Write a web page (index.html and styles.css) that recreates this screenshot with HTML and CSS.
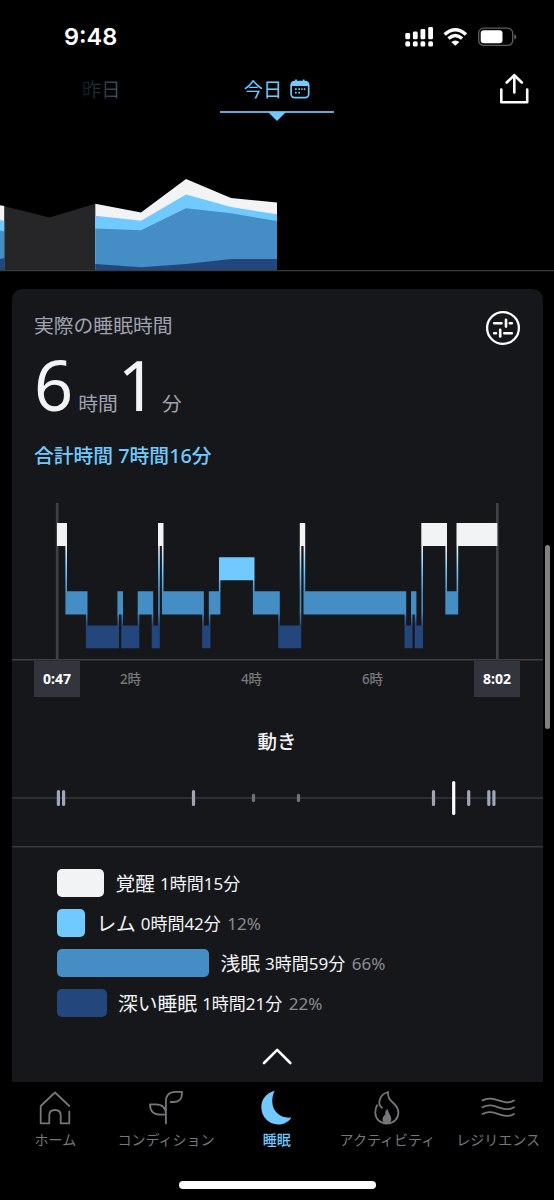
FILE: index.html
```html
<!DOCTYPE html>
<html lang="ja">
<head>
<meta charset="utf-8">
<title>睡眠</title>
<link rel="stylesheet" href="styles.css">
</head>
<body>
<div class="screen">
  <header class="status">
    <span class="clock">9:48</span>
    <svg class="status-icons" width="114" height="24" viewBox="404 25 114 24">
      <g fill="#fff">
        <rect x="405.300" y="33" width="4.800" height="6.300" rx="1.400"/><rect x="412.900" y="31.500" width="4.800" height="7.800" rx="1.400"/>
        <rect x="420.500" y="29" width="4.800" height="10.300" rx="1.400"/><rect x="428.200" y="27" width="4.800" height="12.300" rx="1.400"/>
        <rect x="405.300" y="41.300" width="4.800" height="5.200" rx="1.600"/><rect x="412.900" y="41.300" width="4.800" height="5.200" rx="1.600"/>
        <rect x="420.500" y="41.300" width="4.800" height="5.200" rx="1.600"/><rect x="428.200" y="41.300" width="4.800" height="5.200" rx="1.600"/>
        <path d="M451.200 41.900Q455.300 38.900 459.400 41.900L455.300 45.700Z"/>
      </g>
      <g fill="none" stroke="#fff" stroke-width="3.400">
        <path d="M444.600 34.600Q455.300 24.800 466 34.600"/>
        <path d="M448.500 38.500Q455.300 32.400 462.100 38.500"/>
      </g>
      <rect x="478.700" y="28.200" width="34" height="17.200" rx="5" fill="none" stroke="#5e5e5e" stroke-width="1.300"/>
      <rect x="480.700" y="30.300" width="21.800" height="13" rx="3" fill="#fff"/>
      <path d="M514.300 34.200Q516.300 34.800 516.300 36.800T514.300 39.400Z" fill="#666"/>
    </svg>
  </header>

  <nav class="days">
    <span class="day-prev">昨日</span>
    <div class="day-today">
      <span>今日</span>
      <svg width="20" height="20" viewBox="0 0 20 20">
        <rect x="1.100" y="2.500" width="17.600" height="16.100" rx="3.500" fill="none" stroke="#70caff" stroke-width="1.700"/>
        <path d="M1 7V5.500Q1 2.200 4.500 2.200H15.300Q18.800 2.200 18.800 5.500V7ZM5.100 .6H6.900V3H5.100ZM12.800 .6H14.600V3H12.800Z" fill="#70caff"/>
        <path d="M5 9.300H6.700V11H5ZM8.300 9.300H10V11H8.300ZM11.200 9.300H12.600V11H11.200ZM13.800 9.300H15.300V11H13.800ZM5 12.800H6.700V14.500H5ZM8.300 12.800H10V14.500H8.300Z" fill="#70caff"/>
      </svg>
    </div>
    <svg class="share" width="30" height="32" viewBox="499 73 30 32" fill="none" stroke="#fff" stroke-width="2.600" stroke-linecap="round" stroke-linejoin="round">
      <path d="M501.300 89.500V102.300H527.200V89.500M514.300 92.500V75.500M506.700 82.500L514.300 75.200L521.800 82.500"/>
    </svg>
  </nav>

  <svg class="trend" width="554" height="152" viewBox="0 120 554 152">
    <path d="M0 205.300L4.500 206V270H0Z" fill="#f2f3f5"/><path d="M0 220L4.500 221V270H0Z" fill="#70caff"/>
    <path d="M0 230.500L4.500 231.500V270H0Z" fill="#458ec5"/><path d="M0 259L4.500 258V270H0Z" fill="#23477c"/>
    <path d="M4.500 206.300L49.500 217.500L95.300 203.700V270.500H4.500Z" fill="#262628"/>
    <path d="M95.300 203.700L141 212.500L186 179L231 198L277 202.500V270H95.300Z" fill="#f2f3f5"/>
    <path d="M95.300 215.700L141 220.700L186 194.500L231 207L277 214.300V270H95.300Z" fill="#70caff"/>
    <path d="M95.300 228.500L141 230.300L186 208.300L231 213.300L277 221V270H95.300Z" fill="#458ec5"/>
    <path d="M95.300 264L141 267.300L186 264L231 259H277V270H95.300Z" fill="#23477c"/>
    <path d="M0 270.700H554" stroke="#3a3a3e" stroke-width="1.300"/>
  </svg>

  <main class="card">
    <div class="card-head">
      <h1>実際の睡眠時間</h1>
      <svg width="36" height="36" viewBox="0 0 36 36" fill="none" stroke="#fff" stroke-linecap="round">
        <circle cx="18" cy="18" r="15.900" stroke-width="2.300"/>
        <path d="M9.200 13.300H16.500M24.800 13.300H26.800M9.200 23.200H11M19.300 23.200H26.800M21 9.800V16.600M15.200 19.700V26.500" stroke-width="2.600"/>
      </svg>
    </div>
    <div class="duration"><b>6</b><span>時間</span><b>1</b><span>分</span></div>
    <div class="total">合計時間 7時間16分</div>

    <svg class="hypnogram" width="531" height="161" viewBox="12 500 531 161">
      <defs>
        <linearGradient id="stages" gradientUnits="userSpaceOnUse" x1="0" y1="546" x2="0" y2="626">
          <stop offset="0" stop-color="#f2f3f5"/><stop offset=".3" stop-color="#70caff"/>
          <stop offset=".6" stop-color="#458ec5"/><stop offset=".82" stop-color="#458ec5"/><stop offset="1" stop-color="#23477c"/>
        </linearGradient>
      </defs>
      <path d="M57.200 503V660M497.300 503V660" stroke="#414145" stroke-width="2.700"/>
      <path d="M12 659.700H543" stroke="#414145" stroke-width="1.500"/>
      <path stroke="url(#stages)" stroke-width="1.600" fill="none" d="M66.200 546V592M86.700 614V626M118.200 614V626M122.200 614V626M138.500 614V626M152.500 614V626M159 546V626M162.700 546V592M203 614V626M209.600 614V626M219.700 580V592M253.700 580V592M279 614V626M300.500 546V626M304.400 546V592M405.400 614V626M411.800 614V626M415.600 614V626M422.200 546V626M446.200 546V592M457.400 546V592"/>
      <path fill="#f2f3f5" d="M57 523H67V546H57ZM158 523H163.500V546H158ZM299.800 523H305.200V546H299.800ZM421.300 523H447V546H421.300ZM456.500 523H497.300V546H456.500Z"/>
      <path fill="#70caff" d="M219 557.300H254.500V580.300H219Z"/>
      <path fill="#458ec5" d="M65.400 591.300H87.500V614.500H65.400ZM117.400 591.300H123V614.500H117.400ZM137.700 591.300H153.200V614.500H137.700ZM161.900 591.300H203.800V614.500H161.900ZM208.800 591.300H220.400V614.500H208.800ZM252.900 591.300H279.800V614.500H252.900ZM303.500 591.300H406.200V614.500H303.500ZM411 591.300H416.400V614.500H411ZM445.300 591.300H458.200V614.500H445.300Z"/>
      <path fill="#23477c" d="M85.900 625.500H119V648.200H85.900ZM121.300 625.500H139.300V648.200H121.300ZM151.700 625.500H159.800V648.200H151.700ZM202.200 625.500H210.400V648.200H202.200ZM278.200 625.500H301.200V648.200H278.200ZM404.500 625.500H412.500V648.200H404.500ZM414.800 625.500H423V648.200H414.800Z"/>
    </svg>
    <div class="axis">
      <span class="bound">0:47</span><span class="hour hour-2">2時</span><span class="hour">4時</span><span class="hour">6時</span><span class="bound bound-end">8:02</span>
    </div>

    <h2>動き</h2>
    <svg class="movement" width="531" height="72" viewBox="12 776 531 72">
      <path d="M12 798H543M12 846.800H543" stroke="#38393d" stroke-width="1.600"/>
      <g stroke-width="3.200" stroke-linecap="round">
        <path stroke="#9fa6b7" d="M58.400 791.600V804.400M63.600 791.600V804.400M193.500 791.600V804.400M433.500 791.600V804.400M468.700 791.600V804.400M488.800 791.600V804.400M493.900 791.600V804.400"/>
        <path stroke="#707276" d="M253.500 795.400V800.600M298.500 795.400V800.600"/>
        <path stroke="#fff" d="M453.700 782.500V813.500"/>
      </g>
    </svg>

    <ul class="legend">
      <li><i class="bar awake"></i><strong>覚醒</strong><span>1時間15分</span></li>
      <li><i class="bar rem"></i><strong>レム</strong><span>0時間42分</span><em>12%</em></li>
      <li><i class="bar light"></i><strong>浅眠</strong><span>3時間59分</span><em>66%</em></li>
      <li><i class="bar deep"></i><strong>深い睡眠</strong><span>1時間21分</span><em>22%</em></li>
    </ul>
    <svg class="collapse" width="32" height="20" viewBox="0 0 32 20" fill="none" stroke="#fff" stroke-width="2.600" stroke-linecap="round" stroke-linejoin="round"><path d="M2 16L15.200 2.800L28.300 16"/></svg>
  </main>

  <nav class="tabs">
    <a><svg width="36" height="36" viewBox="37 1090 36 36" fill="none" stroke="#77777a" stroke-width="1.800"><path stroke-linecap="round" stroke-linejoin="round" d="M69.300 1106L55 1092.500L40.700 1106V1123.300H49.300V1115.300Q49.300 1110 55 1110T60.700 1115.300V1123.300H69.300V1111.500"/></svg>ホーム</a>
    <a><svg width="36" height="36" viewBox="148 1090 36 36" fill="none" stroke="#77777a" stroke-width="1.800" stroke-linecap="round" stroke-linejoin="round"><path d="M165.900 1123.500V1101.500Q165.900 1091.800 175.500 1091.800H182V1093Q182 1102 174 1102H170.800M165.900 1114.700H161Q150 1114.700 150 1104.400H155.500Q165.900 1104.400 165.900 1114.700"/></svg>コンディション</a>
    <a class="on"><svg width="36" height="36" viewBox="259 1090 36 36"><path d="M274.800 1090.800C266.500 1092.500 261.300 1099.500 261.300 1107.300C261.300 1117 269 1124.500 278.200 1124.500C284 1124.500 289 1121.800 291.400 1117.500C280.500 1118.700 272.600 1111.500 272.300 1102.300C272.200 1098 273 1094 274.800 1090.800Z" fill="#70caff"/></svg>睡眠</a>
    <a><svg width="36" height="36" viewBox="369.400 1090 36 36" fill="none" stroke="#77777a" stroke-width="1.800" stroke-linecap="round" stroke-linejoin="round"><path d="M382.400 1107.800C377.500 1104.500 379.500 1094.500 388.500 1092C387 1102.500 398.800 1102.500 398.800 1112.500C398.800 1118.800 394 1123.500 387.300 1123.500C380.500 1123.500 375.700 1118.800 375.700 1112.800C375.700 1109.500 376.400 1107 377.500 1105.200"/><path stroke="none" fill="#77777a" d="M388 1108.800C388.800 1113.500 391.700 1115.500 391.700 1119.300C391.700 1121.500 390.300 1123.600 387.500 1123.600C384.700 1123.600 382.900 1122 382.900 1119.500C382.900 1117.500 384 1115.600 385.600 1114.700C385.400 1112 386.100 1110.300 388 1108.800Z"/></svg>アクティビティ</a>
    <a><svg width="36" height="36" viewBox="480 1090 36 36" fill="none" stroke="#77777a" stroke-width="1.800" stroke-linecap="round"><path d="M482.500 1100.400C494 1094 503 1107 514 1100.400M482.500 1107.200C494 1100.800 503 1113.800 514 1107.200M482.500 1114C494 1107.600 503 1120.600 514 1114"/></svg>レジリエンス</a>
  </nav>
  <div class="home-bar"></div>
  <div class="scrollbar"></div>
</div>
</body>
</html>
```
FILE: styles.css
```css
* { box-sizing: border-box; }
body {
  margin: 0;
  background: #000;
  color: #f2f3f5;
  font-family: "Noto Sans", "Noto Sans CJK JP", sans-serif;
}
svg { display: block; flex: none; }
.screen {
  position: relative;
  width: 554px;
  height: 1200px;
  overflow: hidden;
  display: flex;
  flex-direction: column;
}
.status {
  height: 74px;
  padding: 0 36px 0 64px;
  display: flex;
  align-items: center;
  justify-content: space-between;
}
.clock { font: 600 23.500px/30px Inter, sans-serif; color: #fff; }

.days {
  height: 46px;
  display: grid;
  grid-template-columns: 220px 114px 1fr;
  font-size: 19.300px;
  line-height: 32px;
}
.day-prev {
  justify-self: start;
  margin-left: 82px;
  background: linear-gradient(90deg, #10181e, #38596d);
  background-clip: text;
  -webkit-background-clip: text;
  color: transparent;
  height: 32px;
}
.day-today {
  position: relative;
  height: 39px;
  display: flex;
  justify-content: center;
  gap: 8px;
  color: #70caff;
  border-bottom: 2px solid #5fabd8;
}
.day-today svg { margin-top: 5px; }
.day-today::after {
  content: "";
  position: absolute;
  top: 38px;
  left: 48px;
  border: 9px solid transparent;
  border-top-color: #70caff;
  border-bottom: 0;
}
.share { justify-self: end; margin-right: 25px; margin-top: -1px; }
.trend { flex: none; }

.card {
  height: 793px;
  flex: none;
  margin: 17px 11px 0 12px;
  background: #16171a;
  border-radius: 10px 10px 0 0;
}
.card-head {
  height: 62px;
  padding: 21px 22px 0 22px;
  display: flex;
  justify-content: space-between;
}
h1 { margin: 1px 0 0; font-size: 19.800px; line-height: 30px; font-weight: 400; color: #9fa3b0; }
.duration {
  height: 86px;
  padding-left: 22px;
  display: flex;
  align-items: baseline;
  line-height: 68px;
}
.duration b { font-size: 68.500px; font-weight: 400; }
.duration span { font-size: 19.800px; color: #9fa3b0; margin-left: 5px; }
.total {
  height: 63px;
  padding: 4px 0 0 22px;
  font-size: 19.800px;
  line-height: 30px;
  font-weight: 500;
  color: #70caff;
}
.axis {
  height: 37px;
  padding: 0 23px 0 22px;
  display: grid;
  grid-template-columns: 46px 111px 121px 121px 1fr;
  font-size: 13.500px;
  line-height: 37px;
  text-align: center;
}
.bound { background: #33353c; color: #fff; font-weight: 700; font-size: 14px; height: 36px; line-height: 35px; }
.bound-end { justify-self: end; width: 46px; }
.hour { color: #77787b; font-weight: 500; }
.hour-2 { padding-right: 10px; }
h2 {
  margin: 0;
  padding: 29px 1px 0 0;
  height: 78px;
  font-size: 19.500px;
  line-height: 30px;
  font-weight: 500;
  text-align: center;
}
.legend {
  list-style: none;
  margin: 0;
  padding: 21px 0 0 45px;
  display: grid;
  gap: 12px;
}
.legend li { height: 28px; display: flex; align-items: center; line-height: 28px; font-size: 17px; }
.legend li > :not(.bar) { padding-top: 2px; }
.bar { height: 28px; border-radius: 5px; margin-right: 11.500px; }
.awake { width: 47px; background: #f2f3f5; }
.rem { width: 28px; background: #70caff; }
.light { width: 152px; background: #458ec5; }
.deep { width: 49.500px; background: #23477c; }
.legend strong { font-size: 19.800px; font-weight: 400; margin-right: 5px; }
.legend em { font-style: normal; color: #8b8c90; margin-left: 6.500px; }
.collapse { margin: 30px auto 0; }

.tabs {
  height: 99px;
  flex: none;
  padding-top: 8px;
  display: grid;
  grid-template-columns: repeat(5, 110.700px);
}
.tabs a {
  display: flex;
  flex-direction: column;
  align-items: center;
  font-size: 14px;
  line-height: 28px;
  color: #77777a;
  white-space: nowrap;
}
.tabs .on { color: #70caff; font-weight: 500; }
.home-bar {
  width: 197px;
  height: 7.500px;
  border-radius: 4px;
  background: #fff;
  margin: 0 auto;
}
.scrollbar {
  position: absolute;
  left: 545px;
  top: 545px;
  width: 5px;
  height: 184px;
  border-radius: 3px;
  background: #818181;
}
```
